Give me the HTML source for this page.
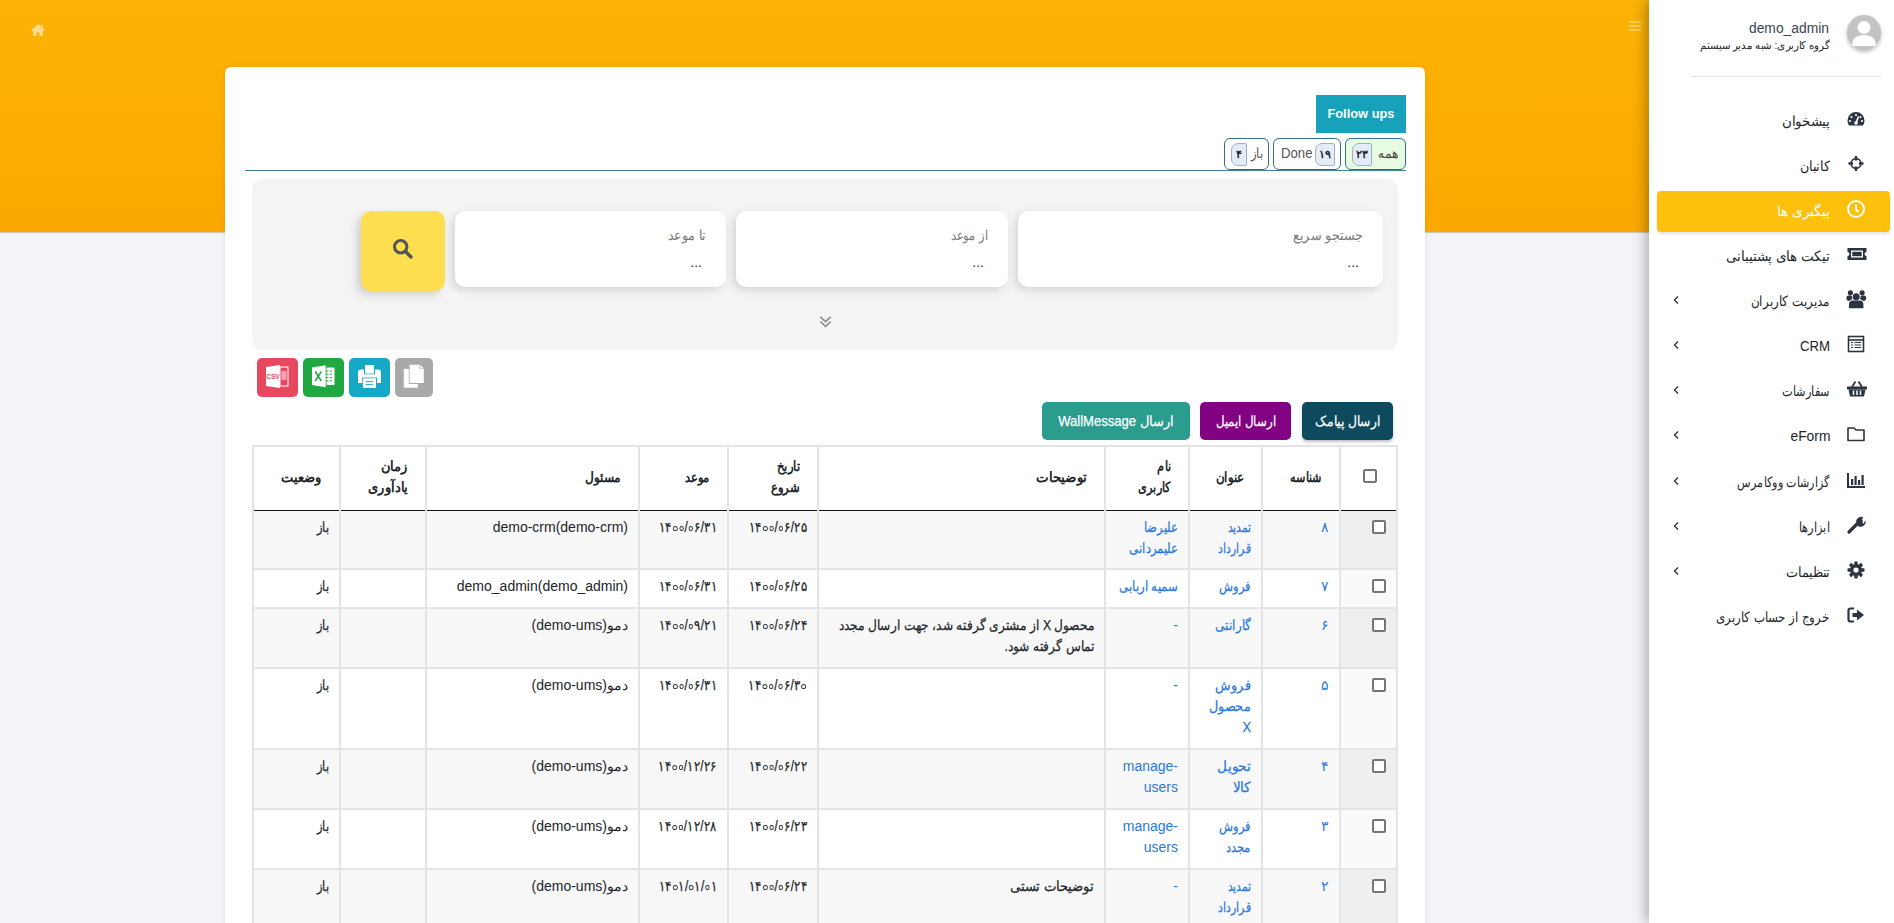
<!DOCTYPE html>
<html lang="fa">
<head>
<meta charset="utf-8">
<style>
*{box-sizing:border-box;margin:0;padding:0}
html,body{width:1894px;height:923px;overflow:hidden}
body{font-family:"Liberation Sans",sans-serif;background:#f3f4f8;position:relative;color:#212529;font-size:14px}
.a{position:absolute}
.hdr{left:0;top:0;width:1894px;height:232px;background:linear-gradient(180deg,#fbb306 0%,#fbae03 45%,#faa700 100%);box-shadow:0 1px 1px rgba(120,80,0,.25)}
.side{left:1649px;top:0;width:245px;height:923px;background:#fff;box-shadow:-3px 0 12px rgba(0,0,0,.3)}
.card{left:225px;top:67px;width:1200px;height:900px;background:#fff;border-radius:6px;box-shadow:0 1px 6px rgba(0,0,0,.07)}
.rt{direction:rtl;text-align:right;white-space:nowrap}
/* sidebar */
.uname{right:65px;top:20px;font-size:14px;color:#3b4351}
.ugrp{right:65px;top:39px;font-size:11px;color:#212529}
.hr{left:1691px;top:76px;width:190px;height:1px;background:#e2e2e2}
.mi{right:64px;font-size:14px;color:#212529;line-height:20px}
.ic{left:1846px;width:20px;height:20px}
.chev{left:1671px;font-size:12px;color:#444}
.active{left:1657px;top:191px;width:233px;height:41px;background:#fdc00c;border-radius:4px;box-shadow:0 2px 3px rgba(0,0,0,.12)}
/* card */
.fbtn{left:1316px;top:95px;width:90px;height:38px;background:#17a1bb;color:#fff;font-weight:bold;font-size:13px;line-height:38px;text-align:center}
.tab{top:138px;height:32px;border:1px solid #336e8c;border-radius:6px;font-size:14px;color:#555}
.badge{top:4px;width:20px;height:23px;background:#e4ecf8;border:1px solid #9db2c9;border-radius:7px 2px 2px 7px;font-size:11px;font-weight:bold;color:#222;text-align:center;line-height:21px}
.tline{left:245px;top:170px;width:1161px;height:1px;background:#3f7d90}
.panel{left:252px;top:179px;width:1146px;height:171px;background:#f4f4f4;border-radius:10px}
.inp{top:211px;height:76px;background:#fff;border-radius:10px;box-shadow:-3px 3px 8px rgba(0,0,0,.13)}
.lbl{right:20px;top:16px;font-size:14px;color:#7a7a7a}
.dots{right:24px;top:43px;font-size:14px;color:#333;letter-spacing:0}
.sbtn{left:361px;top:211px;width:84px;height:80px;background:#ffdf4f;border-radius:10px;box-shadow:-4px 4px 9px rgba(0,0,0,.15)}
.ebtn{top:358px;height:39px;border-radius:5px}
.abtn{top:402px;height:38px;border-radius:5px;color:#fff;font-size:14px;line-height:38px;text-align:center}

.tbl{left:252px;top:445px;width:1146px;border-collapse:collapse;table-layout:fixed;direction:rtl;font-size:14px;line-height:21px}
.tbl td,.tbl th{border:2px solid #e3e4e7;vertical-align:top;text-align:right;padding:6px 10px 8px 4px;overflow:hidden;white-space:nowrap}
.tbl th{font-weight:bold;vertical-align:middle;padding-right:17px;color:#212529}
.tbl thead tr{height:64px}
.tbl thead th{border-bottom:1px solid #111}
.tbl tbody tr:first-child td{border-top:1px solid #111}
.tbl tbody tr:nth-child(odd) td{background:#f8f8f9}
.tbl tbody tr:nth-child(odd) td.c0{background:#efeff0}
.tbl tbody td.c0{background:#fafafa}
.lk{color:#2a78dd}
.z{display:inline-block;width:5.5px;height:5px;border:1.3px solid currentColor;border-radius:50%;vertical-align:1px;margin:0 1px}
.dt{-webkit-text-stroke:0.1px currentColor}
.tbl th .k{-webkit-text-stroke:0}
.mi .k,.ugrp .k,.uname .k,.tab .k,.fbtn .kc,.lbl .k{-webkit-text-stroke:0}
.cb{display:inline-block;width:14px;height:14px;border:2px solid #767676;border-radius:2px;background:#fff}
.k{display:inline-block;transform-origin:100% 50%;-webkit-text-stroke:0.25px currentColor}
.kc{display:inline-block;transform-origin:50% 50%;-webkit-text-stroke:0.25px currentColor}
</style>
</head>
<body>
<div class="a hdr"></div>
<!-- home icon -->
<svg class="a" style="left:30px;top:22px" width="16" height="16" viewBox="0 0 16 16"><path d="M8 2 L1 8.2 L2.2 9.2 L3 8.5 V14 H6.5 V10.5 H9.5 V14 H13 V8.5 L13.8 9.2 L15 8.2 L12.5 6 V2.5 H11 V4.7 Z" fill="#fcd98c"/></svg>
<!-- hamburger -->
<svg class="a" style="left:1629px;top:20px" width="12" height="12" viewBox="0 0 12 12"><rect x="0" y="1.2" width="12" height="1.8" fill="#fcd05a"/><rect x="0" y="5.2" width="12" height="1.8" fill="#fcd05a"/><rect x="0" y="9.2" width="12" height="1.8" fill="#fcd05a"/></svg>

<div class="a card"></div>

<div class="a fbtn"><span class="kc" style="transform:scaleX(0.987)">Follow ups</span></div>
<div class="a tab" style="left:1345px;width:61px;background:#e7fbe0"><div class="a badge" style="left:6px">۲۳</div><span class="a rt" style="right:7px;top:6px;color:#444"><span class="k" style="transform:scaleX(0.870)">همه</span></span></div>
<div class="a tab" style="left:1273px;width:68px"><div class="a badge" style="left:41px">۱۹</div><span class="a" style="left:5px;top:6px;font-size:14px"><span class="k" style="transform:scaleX(0.941)">Done</span></span></div>
<div class="a tab" style="left:1224px;width:45px"><div class="a badge" style="left:6px;width:16px">۴</div><span class="a rt" style="right:5px;top:6px"><span class="k" style="transform:scaleX(0.827)">باز</span></span></div>
<div class="a tline"></div>

<div class="a panel"></div>
<div class="a inp" style="left:1018px;width:365px"><span class="a rt lbl"><span class="k" style="transform:scaleX(0.916)">جستجو سریع</span></span><span class="a dots">...</span></div>
<div class="a inp" style="left:736px;width:272px"><span class="a rt lbl"><span class="k" style="transform:scaleX(0.824)">از موعد</span></span><span class="a dots">...</span></div>
<div class="a inp" style="left:455px;width:271px"><span class="a rt lbl"><span class="k" style="transform:scaleX(0.900)">تا موعد</span></span><span class="a dots">...</span></div>
<div class="a sbtn"><svg class="a" style="left:31px;top:27px" width="22" height="22" viewBox="0 0 22 22"><circle cx="8.7" cy="8.7" r="6.2" fill="none" stroke="#555" stroke-width="3"/><path d="M13.3 13.3 L19 19" stroke="#555" stroke-width="3.4" stroke-linecap="round"/></svg></div>
<svg class="a" style="left:819px;top:315px" width="13" height="14" viewBox="0 0 13 14"><path d="M1.3 1.8 L6.5 6.6 L11.7 1.8 M1.3 6.6 L6.5 11.4 L11.7 6.6" fill="none" stroke="#8f8f8f" stroke-width="1.6"/></svg>

<!-- export buttons -->
<div class="a ebtn" style="left:257px;width:41px;background:#e5485f"><svg class="a" style="left:0;top:0" width="41" height="39" viewBox="0 0 41 39"><rect x="23" y="9" width="8" height="19" fill="none" stroke="#fff" stroke-width="1"/><rect x="24.5" y="13" width="5" height="9" fill="#f4a5b0"/><path d="M9 9 L23 7 V30 L9 28 Z" fill="#fff"/><text x="16" y="20.5" font-family="Liberation Sans" font-size="6.5" font-weight="bold" fill="#e5485f" text-anchor="middle">CSV</text></svg></div>
<div class="a ebtn" style="left:303px;width:41px;background:#22a843"><svg class="a" style="left:0;top:0" width="41" height="39" viewBox="0 0 41 39"><rect x="23.5" y="9.5" width="8" height="17.5" rx="1" fill="#fff"/><path d="M23 13 H25.5 M27 13 H29 M23 16.3 H25.5 M27 16.3 H29 M23 19.6 H25.5 M27 19.6 H29 M23 22.9 H25.5 M27 22.9 H29" stroke="#22a843" stroke-width="1"/><path d="M9 9.4 L22.7 7.2 V29.2 L9 27 Z" fill="#fff"/><path d="M12.3 13.5 L18.3 23 M18.3 13.5 L12.3 23" stroke="#22a843" stroke-width="1.5"/></svg></div>
<div class="a ebtn" style="left:349px;width:41px;background:#17a8c6"><svg class="a" style="left:0;top:0" width="41" height="39" viewBox="0 0 41 39"><path d="M9 25 V14.5 Q9 11.5 12 11.5 H29 Q32 11.5 32 14.5 V25 Z" fill="#fff"/><rect x="15" y="6.3" width="11" height="10" fill="#17a8c6"/><rect x="16" y="7" width="9" height="8.6" fill="#fff"/><rect x="13" y="19.5" width="15" height="11" fill="#17a8c6"/><rect x="13.8" y="20.3" width="13.2" height="9.6" fill="#fff"/><path d="M17 23.6 H24 M17 26.4 H24" stroke="#17a8c6" stroke-width="1"/></svg></div>
<div class="a ebtn" style="left:395px;width:38px;background:#a9a9a9"><svg class="a" style="left:0;top:0" width="38" height="39" viewBox="0 0 38 39"><rect x="8.8" y="10.9" width="14.1" height="18.8" fill="#fff"/><path d="M13.8 6 H25 L29.6 10.6 V26 H13.8 Z" fill="#a9a9a9"/><path d="M14.6 6.8 H24.5 V11 H28.8 V25.1 H14.6 Z" fill="#fff"/><path d="M25.2 6.8 L28.8 10.4 H25.2 Z" fill="#fff"/></svg></div>

<!-- action buttons -->
<div class="a abtn rt" style="left:1302px;width:91px;background:#0d4a5e;box-shadow:0 2px 3px rgba(0,0,0,.25);text-align:center"><span class="kc" style="transform:scaleX(0.880)">ارسال پیامک</span></div>
<div class="a abtn rt" style="left:1200px;width:91px;background:#820082;text-align:center"><span class="kc" style="transform:scaleX(0.842)">ارسال ایمیل</span></div>
<div class="a abtn rt" style="left:1042px;width:148px;background:#2b9d8f;text-align:center"><span class="kc" style="transform:scaleX(0.932)">ارسال WallMessage</span></div>

<table class="a tbl"><colgroup><col style="width:57px"><col style="width:78px"><col style="width:73px"><col style="width:84px"><col style="width:287px"><col style="width:90px"><col style="width:89px"><col style="width:213px"><col style="width:86px"><col style="width:87px"></colgroup>
<thead><tr><th class="c0" style="text-align:center;padding:0 0 0 3px"><span class="cb"></span></th><th><span class="k" style="transform:scaleX(0.800)">شناسه</span></th><th><span class="k" style="transform:scaleX(0.848)">عنوان</span></th><th><span class="k" style="transform:scaleX(0.805)">نام<br>کاربری</span></th><th><span class="k" style="transform:scaleX(0.953)">توضیحات</span></th><th><span class="k" style="transform:scaleX(0.829)">تاریخ<br>شروع</span></th><th><span class="k" style="transform:scaleX(0.823)">موعد</span></th><th><span class="k" style="transform:scaleX(0.866)">مسئول</span></th><th><span class="k" style="transform:scaleX(0.930)">زمان<br>یادآوری</span></th><th><span class="k" style="transform:scaleX(0.932)">وضعیت</span></th></tr></thead><tbody>
<tr style="height:59px"><td class="c0" style="padding-top:8px;padding-right:10px"><span class="cb"></span></td><td class="lk">۸</td><td class="lk"><span class="k" style="transform:scaleX(0.776)">تمدید<br>قرارداد</span></td><td class="lk"><span class="k" style="transform:scaleX(0.831)">علیرضا<br>علیمردانی</span></td><td></td><td><span class="k dt" dir="ltr" style="transform:scaleX(0.834)">۱۴<i class="z"></i><i class="z"></i>/<i class="z"></i>۶/۲۵</span></td><td><span class="k dt" dir="ltr" style="transform:scaleX(0.834)">۱۴<i class="z"></i><i class="z"></i>/<i class="z"></i>۶/۳۱</span></td><td>demo-crm(demo-crm)</td><td></td><td><span class="k" style="transform:scaleX(0.820)">باز</span></td></tr>
<tr style="height:39px"><td class="c0" style="padding-top:8px;padding-right:10px"><span class="cb"></span></td><td class="lk">۷</td><td class="lk"><span class="k" style="transform:scaleX(0.821)">فروش</span></td><td class="lk"><span class="k" style="transform:scaleX(0.832)">سمیه اربابی</span></td><td></td><td><span class="k dt" dir="ltr" style="transform:scaleX(0.834)">۱۴<i class="z"></i><i class="z"></i>/<i class="z"></i>۶/۲۵</span></td><td><span class="k dt" dir="ltr" style="transform:scaleX(0.834)">۱۴<i class="z"></i><i class="z"></i>/<i class="z"></i>۶/۳۱</span></td><td>demo_admin(demo_admin)</td><td></td><td><span class="k" style="transform:scaleX(0.820)">باز</span></td></tr>
<tr style="height:60px"><td class="c0" style="padding-top:8px;padding-right:10px"><span class="cb"></span></td><td class="lk">۶</td><td class="lk"><span class="k" style="transform:scaleX(0.857)">گارانتی</span></td><td class="lk">-</td><td><span class="k" style="transform:scaleX(0.869)">محصول X از مشتری گرفته شد، جهت ارسال مجدد<br>تماس گرفته شود.</span></td><td><span class="k dt" dir="ltr" style="transform:scaleX(0.834)">۱۴<i class="z"></i><i class="z"></i>/<i class="z"></i>۶/۲۴</span></td><td><span class="k dt" dir="ltr" style="transform:scaleX(0.834)">۱۴<i class="z"></i><i class="z"></i>/<i class="z"></i>۹/۲۱</span></td><td>دمو(demo-ums)</td><td></td><td><span class="k" style="transform:scaleX(0.820)">باز</span></td></tr>
<tr style="height:81px"><td class="c0" style="padding-top:8px;padding-right:10px"><span class="cb"></span></td><td class="lk">۵</td><td class="lk"><span class="k" style="transform:scaleX(0.913)">فروش<br>محصول<br>X</span></td><td class="lk">-</td><td></td><td><span class="k dt" dir="ltr" style="transform:scaleX(0.840)">۱۴<i class="z"></i><i class="z"></i>/<i class="z"></i>۶/۳<i class="z"></i></span></td><td><span class="k dt" dir="ltr" style="transform:scaleX(0.834)">۱۴<i class="z"></i><i class="z"></i>/<i class="z"></i>۶/۳۱</span></td><td>دمو(demo-ums)</td><td></td><td><span class="k" style="transform:scaleX(0.820)">باز</span></td></tr>
<tr style="height:60px"><td class="c0" style="padding-top:8px;padding-right:10px"><span class="cb"></span></td><td class="lk">۴</td><td class="lk"><span class="k" style="transform:scaleX(0.971)">تحویل<br>کالا</span></td><td class="lk"><span dir="ltr">manage-</span><br>users</td><td></td><td><span class="k dt" dir="ltr" style="transform:scaleX(0.834)">۱۴<i class="z"></i><i class="z"></i>/<i class="z"></i>۶/۲۲</span></td><td><span class="k dt" dir="ltr" style="transform:scaleX(0.828)">۱۴<i class="z"></i><i class="z"></i>/۱۲/۲۶</span></td><td>دمو(demo-ums)</td><td></td><td><span class="k" style="transform:scaleX(0.820)">باز</span></td></tr>
<tr style="height:60px"><td class="c0" style="padding-top:8px;padding-right:10px"><span class="cb"></span></td><td class="lk">۳</td><td class="lk"><span class="k" style="transform:scaleX(0.821)">فروش<br>مجدد</span></td><td class="lk"><span dir="ltr">manage-</span><br>users</td><td></td><td><span class="k dt" dir="ltr" style="transform:scaleX(0.834)">۱۴<i class="z"></i><i class="z"></i>/<i class="z"></i>۶/۲۳</span></td><td><span class="k dt" dir="ltr" style="transform:scaleX(0.828)">۱۴<i class="z"></i><i class="z"></i>/۱۲/۲۸</span></td><td>دمو(demo-ums)</td><td></td><td><span class="k" style="transform:scaleX(0.820)">باز</span></td></tr>
<tr style="height:60px"><td class="c0" style="padding-top:8px;padding-right:10px"><span class="cb"></span></td><td class="lk">۲</td><td class="lk"><span class="k" style="transform:scaleX(0.776)">تمدید<br>قرارداد</span></td><td class="lk">-</td><td><span class="k" style="transform:scaleX(0.945)">توضیحات تستی</span></td><td><span class="k dt" dir="ltr" style="transform:scaleX(0.834)">۱۴<i class="z"></i><i class="z"></i>/<i class="z"></i>۶/۲۴</span></td><td><span class="k dt" dir="ltr" style="transform:scaleX(0.834)">۱۴<i class="z"></i>۱/<i class="z"></i>۱/<i class="z"></i>۱</span></td><td>دمو(demo-ums)</td><td></td><td><span class="k" style="transform:scaleX(0.820)">باز</span></td></tr>
</tbody></table>
<div class="a side"></div>
<div class="a active"></div>
<div class="a" style="left:1847px;top:15px;width:34px;height:35px;border-radius:50%;background:#c3c3c3;box-shadow:0 2px 4px rgba(0,0,0,.25);overflow:hidden"><svg width="34" height="35" viewBox="0 0 34 35"><circle cx="17" cy="12.5" r="6.5" fill="#fff"/><path d="M5 31 Q5 20 17 20 Q29 20 29 31 Z" fill="#fff"/></svg></div>
<div class="a rt uname"><span class="k" style="transform:scaleX(0.988)">demo_admin</span></div>
<div class="a rt ugrp"><span class="k" style="transform:scaleX(0.926)">گروه کاربری: شبه مدیر سیستم</span></div>
<div class="a hr"></div>
<div class="a rt mi" style="top:111px;color:#212529"><span class="k" style="transform:scaleX(0.960)">پیشخوان</span></div>
<div class="a ic" style="top:109px"><svg width="20" height="20" viewBox="0 0 20 20"><path d="M10 3 A8.5 8.5 0 0 0 1.5 11.5 A8.5 8.5 0 0 0 3 16.5 H17 A8.5 8.5 0 0 0 18.5 11.5 A8.5 8.5 0 0 0 10 3 Z" fill="#2c3440"/><circle cx="10" cy="6" r="1.1" fill="#fff"/><circle cx="5.5" cy="8" r="1.1" fill="#fff"/><circle cx="14.5" cy="8" r="1.1" fill="#fff"/><circle cx="4" cy="12" r="1.1" fill="#fff"/><circle cx="16" cy="12" r="1.1" fill="#fff"/><path d="M10 14 L12.5 7.5" stroke="#fff" stroke-width="1.6"/><circle cx="10" cy="14" r="1.8" fill="#fff"/></svg></div>
<div class="a rt mi" style="top:156px;color:#212529"><span class="k" style="transform:scaleX(0.909)">کانبان</span></div>
<div class="a ic" style="top:154px"><svg width="20" height="20" viewBox="0 0 20 20"><circle cx="10" cy="9.5" r="4.9" fill="none" stroke="#2c3440" stroke-width="1.6"/><path d="M10 2 V6.5 M10 12.5 V17 M2.5 9.5 H7 M13 9.5 H17.5" stroke="#2c3440" stroke-width="2.4"/></svg></div>
<div class="a rt mi" style="top:201px;color:#fff"><span class="k" style="transform:scaleX(0.974)">پیگیری ها</span></div>
<div class="a ic" style="top:199px"><svg width="20" height="20" viewBox="0 0 20 20"><circle cx="10" cy="10" r="8" fill="none" stroke="#fff" stroke-width="2"/><path d="M10 5.5 V10.5 L12.5 13" fill="none" stroke="#fff" stroke-width="2"/></svg></div>
<div class="a rt mi" style="top:246px;color:#212529"><span class="k" style="transform:scaleX(0.965)">تیکت های پشتیبانی</span></div>
<div class="a ic" style="top:244px"><svg width="22" height="20" viewBox="0 0 22 20"><path d="M1.5 4 H20.5 V8 A2 2 0 0 0 20.5 12 V16 H1.5 V12 A2 2 0 0 0 1.5 8 Z" fill="#2c3440"/><rect x="5" y="6.5" width="12" height="7" fill="#fff"/><rect x="6.3" y="7.8" width="9.4" height="4.4" fill="#2c3440"/></svg></div>
<div class="a rt mi" style="top:291px;color:#212529"><span class="k" style="transform:scaleX(0.850)">مدیریت کاربران</span></div>
<div class="a ic" style="top:289px"><svg width="22" height="22" viewBox="0 0 22 22"><circle cx="4.4" cy="3.8" r="2.6" fill="#2c3440"/><circle cx="16.1" cy="3.8" r="2.6" fill="#2c3440"/><rect x="0.4" y="6.6" width="6.2" height="5.4" rx="2.4" fill="#2c3440"/><rect x="14" y="6.6" width="6.2" height="5.4" rx="2.4" fill="#2c3440"/><circle cx="10.2" cy="7.7" r="4.3" fill="#fff"/><path d="M2.3 20 V15.2 Q2.3 10.6 6.8 10.6 H13.6 Q18.1 10.6 18.1 15.2 V20 Z" fill="#fff"/><circle cx="10.2" cy="7.7" r="3.5" fill="#2c3440"/><path d="M3 19.2 V15.4 Q3 11.4 7 11.4 H13.4 Q17.4 11.4 17.4 15.4 V19.2 Z" fill="#2c3440"/></svg></div>
<svg class="a" style="left:1672px;top:295px" width="8" height="10" viewBox="0 0 8 10"><path d="M6 1.5 L2.5 5 L6 8.5" fill="none" stroke="#333" stroke-width="1.4"/></svg>
<div class="a rt mi" style="top:336px;color:#212529"><span class="k" style="transform:scaleX(0.941)">CRM</span></div>
<div class="a ic" style="top:334px"><svg width="20" height="20" viewBox="0 0 20 20"><rect x="2.5" y="2.5" width="15" height="15" fill="none" stroke="#2c3440" stroke-width="1.6"/><path d="M2.5 6 H17.5" stroke="#2c3440" stroke-width="1.6"/><path d="M5 8.5 H7 M8.5 8.5 H15 M5 11 H7 M8.5 11 H15 M5 13.5 H7 M8.5 13.5 H15" stroke="#2c3440" stroke-width="1.2"/></svg></div>
<svg class="a" style="left:1672px;top:340px" width="8" height="10" viewBox="0 0 8 10"><path d="M6 1.5 L2.5 5 L6 8.5" fill="none" stroke="#333" stroke-width="1.4"/></svg>
<div class="a rt mi" style="top:381px;color:#212529"><span class="k" style="transform:scaleX(0.807)">سفارشات</span></div>
<div class="a ic" style="top:379px"><svg width="22" height="20" viewBox="0 0 22 20"><path d="M6 8 L9.5 2.5 M16 8 L12.5 2.5" stroke="#2c3440" stroke-width="1.8"/><rect x="1" y="7.5" width="20" height="3" rx="0.5" fill="#2c3440"/><path d="M2.5 10.5 L4 17.5 H18 L19.5 10.5 Z" fill="#2c3440"/><path d="M7.5 11.5 V16 M11 11.5 V16 M14.5 11.5 V16" stroke="#fff" stroke-width="1.5"/></svg></div>
<svg class="a" style="left:1672px;top:385px" width="8" height="10" viewBox="0 0 8 10"><path d="M6 1.5 L2.5 5 L6 8.5" fill="none" stroke="#333" stroke-width="1.4"/></svg>
<div class="a rt mi" style="top:426px;color:#212529"><span class="k" style="transform:scaleX(0.989)">eForm</span></div>
<div class="a ic" style="top:424px"><svg width="20" height="20" viewBox="0 0 20 20"><path d="M2 4 H8 L10 6 H18 V16.5 H2 Z" fill="none" stroke="#2c3440" stroke-width="1.6" stroke-linejoin="round"/></svg></div>
<svg class="a" style="left:1672px;top:430px" width="8" height="10" viewBox="0 0 8 10"><path d="M6 1.5 L2.5 5 L6 8.5" fill="none" stroke="#333" stroke-width="1.4"/></svg>
<div class="a rt mi" style="top:472px;color:#212529"><span class="k" style="transform:scaleX(0.791)">گزارشات ووکامرس</span></div>
<div class="a ic" style="top:470px"><svg width="20" height="20" viewBox="0 0 20 20"><path d="M2 3 V17 H19" fill="none" stroke="#2c3440" stroke-width="2"/><rect x="5" y="9" width="2.2" height="6" fill="#2c3440"/><rect x="8.5" y="6" width="2.2" height="9" fill="#2c3440"/><rect x="12" y="10" width="2.2" height="5" fill="#2c3440"/><rect x="15.5" y="5" width="2.2" height="10" fill="#2c3440"/></svg></div>
<svg class="a" style="left:1672px;top:476px" width="8" height="10" viewBox="0 0 8 10"><path d="M6 1.5 L2.5 5 L6 8.5" fill="none" stroke="#333" stroke-width="1.4"/></svg>
<div class="a rt mi" style="top:517px;color:#212529"><span class="k" style="transform:scaleX(0.816)">ابزارها</span></div>
<div class="a ic" style="top:515px"><svg width="20" height="20" viewBox="0 0 20 20"><path d="M3 17 L11 9" stroke="#2c3440" stroke-width="3.2" stroke-linecap="round"/><path d="M11.5 3.5 A5 5 0 0 1 17.5 2.5 L14.5 5.5 L15 8 L17.5 8.5 L19.5 5.5 A5 5 0 0 1 12 11 Z" fill="#2c3440"/><circle cx="13.5" cy="6.5" r="3.3" fill="#2c3440"/></svg></div>
<svg class="a" style="left:1672px;top:521px" width="8" height="10" viewBox="0 0 8 10"><path d="M6 1.5 L2.5 5 L6 8.5" fill="none" stroke="#333" stroke-width="1.4"/></svg>
<div class="a rt mi" style="top:562px;color:#212529"><span class="k" style="transform:scaleX(0.917)">تنظیمات</span></div>
<div class="a ic" style="top:560px"><svg width="20" height="20" viewBox="0 0 20 20"><g fill="#2c3440"><circle cx="10" cy="10" r="6"/><rect x="8.3" y="1.5" width="3.4" height="17" rx="0.8"/><rect x="8.3" y="1.5" width="3.4" height="17" rx="0.8" transform="rotate(45 10 10)"/><rect x="8.3" y="1.5" width="3.4" height="17" rx="0.8" transform="rotate(90 10 10)"/><rect x="8.3" y="1.5" width="3.4" height="17" rx="0.8" transform="rotate(135 10 10)"/></g><circle cx="10" cy="10" r="2.6" fill="#fff"/></svg></div>
<svg class="a" style="left:1672px;top:566px" width="8" height="10" viewBox="0 0 8 10"><path d="M6 1.5 L2.5 5 L6 8.5" fill="none" stroke="#333" stroke-width="1.4"/></svg>
<div class="a rt mi" style="top:607px;color:#212529"><span class="k" style="transform:scaleX(0.847)">خروج از حساب کاربری</span></div>
<div class="a ic" style="top:605px"><svg width="20" height="20" viewBox="0 0 20 20"><path d="M8 3.5 H4.5 Q2.5 3.5 2.5 5.5 V14.5 Q2.5 16.5 4.5 16.5 H8" fill="none" stroke="#2c3440" stroke-width="2.2"/><path d="M6.5 8 H11 V4.5 L18 10 L11 15.5 V12 H6.5 Z" fill="#2c3440"/></svg></div>
</body>
</html>
